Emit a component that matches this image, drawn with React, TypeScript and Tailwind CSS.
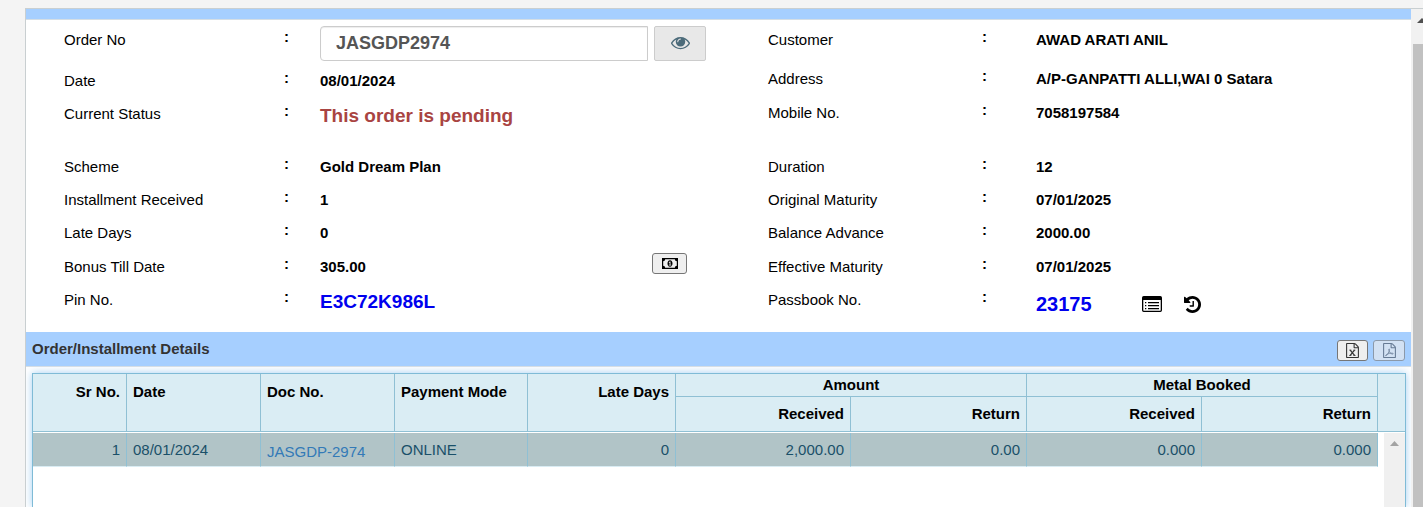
import type { ReactNode } from "react";

const FILE_OUTLINE =
  "M1596 380q28 28 48 76t20 88v1152q0 40-28 68t-68 28h-1344q-40 0-68-28t-28-68v-1600q0-40 28-68t68-28h896q40 0 88 20t76 48zm-444-244v376h376q-10-29-22-41l-313-313q-12-12-41-22zm384 1528v-1024h-416q-40 0-68-28t-28-68v-416h-768v1536h1280z";

function EyeIcon() {
  return (
    <svg viewBox="0 0 1792 1792" className="mb-[2px] h-[19px] w-[19px]" fill="currentColor" aria-hidden="true">
      <path d="M1664 960q-152-236-381-353 61 104 61 225 0 185-131.5 316.5t-316.5 131.5-316.5-131.5-131.5-316.5q0-121 61-225-229 117-381 353 133 205 333.5 326.5t434.5 121.5 434.5-121.5 333.5-326.5zm-720-384q0-20-14-34t-34-14q-125 0-214.5 89.5t-89.5 214.5q0 20 14 34t34 14 34-14 14-34q0-86 61-147t147-61q20 0 34-14t14-34zm848 384q0 34-20 69-140 230-376.5 368.5t-499.5 138.5-499.5-139-376.5-368q-20-35-20-69t20-69q140-229 376.5-368t499.5-139 499.5 139 376.5 368q20 35 20 69z" />
    </svg>
  );
}

function MoneyIcon() {
  return (
    <svg viewBox="0 0 16 11" className="h-[11px] w-4" aria-hidden="true">
      <path fill="currentColor" fillRule="evenodd" d="M0 0h16v11H0zM3.200 1.200A2.200 2.200 0 0 1 1.200 3.200v4.600a2.200 2.200 0 0 1 2 2h9.600a2.200 2.200 0 0 1 2-2V3.200a2.200 2.200 0 0 1-2-2z" />
      <path fill="currentColor" fillRule="evenodd" d="M8 2.200c1.600 0 2.500 1.500 2.500 3.300S9.600 8.800 8 8.800 5.500 7.300 5.500 5.500 6.400 2.200 8 2.200zM7.700 3.500l-1 .9.500.5.400-.3v2.100h-.8v.7h2.500v-.7h-.8V3.500z" />
    </svg>
  );
}

function ListIcon() {
  return (
    <svg viewBox="0 0 20 16" className="h-4 w-5" aria-hidden="true">
      <path fill="currentColor" fillRule="evenodd" d="M1.700 0h16.600A1.700 1.700 0 0 1 20 1.700v12.600a1.700 1.700 0 0 1-1.700 1.700H1.700A1.700 1.700 0 0 1 0 14.300V1.700A1.700 1.700 0 0 1 1.700 0zM1.300 4v10.300c0 .3.200.4.400.4h16.600c.2 0 .4-.1.400-.4V4z" />
      <path fill="currentColor" d="M3 6h1.300v1.200H3zM3 9h1.300v1.200H3zM3 12h1.300v1.200H3zM6 6h11v1.200H6zM6 9h11v1.200H6zM6 12h11v1.200H6z" />
    </svg>
  );
}

function HistoryIcon() {
  return (
    <svg viewBox="128 128 1536 1536" className="h-[17px] w-[17px]" fill="currentColor" aria-hidden="true">
      <path d="M1664 896q0 156-61 298t-164 245-245 164-298 61q-172 0-327-72.500t-264-204.500q-7-10-6.500-22.500t8.500-20.500l137-138q10-9 25-9 16 2 23 12 73 95 179 147t225 52q104 0 198.500-40.500t163.500-109.500 109.500-163.500 40.500-198.500-40.500-198.500-109.500-163.500-163.500-109.500-198.500-40.500q-98 0-188 35.500t-160 101.500l137 138q31 30 14 69-17 40-59 40h-448q-26 0-45-19t-19-45v-448q0-42 40-59 39-17 69 14l130 129q107-101 244.500-156.500t284.500-55.500q156 0 298 61t245 164 164 245 61 298zm-640-288v448q0 14-9 23t-23 9h-320q-14 0-23-9t-9-23v-64q0-14 9-23t23-9h224v-352q0-14 9-23t23-9h64q14 0 23 9t9 23z" />
    </svg>
  );
}

function ExcelIcon() {
  return (
    <svg viewBox="0 0 1792 1792" className="h-[15px] w-[15px]" aria-hidden="true">
      <path fill="currentColor" d={FILE_OUTLINE} />
      <path fill="none" stroke="currentColor" strokeWidth="150" d="M620 860l520 620M1140 860l-520 620" />
      <path fill="none" stroke="currentColor" strokeWidth="100" d="M520 850h240M1000 850h240M500 1490h260M1000 1490h260" />
    </svg>
  );
}

function PdfIcon() {
  return (
    <svg viewBox="0 0 1792 1792" className="h-[15px] w-[15px]" aria-hidden="true">
      <path fill="currentColor" d={FILE_OUTLINE} />
      <path
        fill="none"
        stroke="currentColor"
        strokeWidth="90"
        d="M850 700c-60 0-50 150 0 270 70 180 200 310 390 350 110 20 150-60 40-90-220-50-520 20-750 160-130 80-130 170-50 130 180-100 370-480 410-640 20-90 10-180-40-180z"
      />
    </svg>
  );
}

function Row({ label, htmlFor, tall, children }: { label: string; htmlFor?: string; tall?: boolean; children: ReactNode }) {
  return (
    <div className={tall ? "flex h-[41px] items-start" : "flex h-[33px] items-start"}>
      {htmlFor ? (
        <label htmlFor={htmlFor} className="w-[220px] shrink-0">{label}</label>
      ) : (
        <span className="w-[220px] shrink-0">{label}</span>
      )}
      <span className="w-9 shrink-0 font-bold leading-[14px]">:</span>
      <div className="min-w-0 flex-1 font-bold">{children}</div>
    </div>
  );
}

function RightRow({ label, tall, children }: { label: string; tall?: boolean; children: ReactNode }) {
  return (
    <div className={tall ? "flex h-[39px] items-start" : "flex h-[33px] items-start"}>
      <span className="w-[214px] shrink-0">{label}</span>
      <span className="w-[54px] shrink-0 font-bold leading-[14px]">:</span>
      <div className="min-w-0 flex-1 font-bold">{children}</div>
    </div>
  );
}

const headCell = "border-r border-[#8fc0d4] px-[6px] text-[15px] leading-5 font-bold text-black";
const bodyCell = "h-[34px] border-r border-b border-r-[#8fc0d4] border-b-[#d9ecf3] bg-[#b1c4c7] px-[6px] text-[15px] leading-5 text-[#1a5069]";

export default function App() {
  return (
    <div className="flex min-h-screen flex-col bg-[#f4f4f4] pt-2 pl-[25px] font-['Liberation_Sans',Arial,sans-serif] text-[15px] leading-5 text-black">
      <div className="flex flex-1 border-t border-l border-[#c9cfd1] bg-white">
        <main className="flex min-w-0 flex-1 flex-col">
          <div className="h-[11px] shrink-0 border-b border-[#d5dee5] bg-[#a6cfff]" />

          <section className="flex h-[312px] pt-[10px] pl-[38px]">
            <div className="w-[704px] shrink-0">
              <Row label="Order No" htmlFor="order-no" tall>
                <div className="-mt-1 flex gap-[6px]">
                  <input
                    id="order-no"
                    type="text"
                    defaultValue="JASGDP2974"
                    className="h-[35px] w-[328px] rounded-l border border-[#ccc] bg-white px-[15px] text-[18px] font-bold text-[#555] shadow-[inset_0_1px_1px_rgba(0,0,0,0.075)]"
                  />
                  <button type="button" aria-label="View order" className="flex h-[35px] w-[52px] items-center justify-center rounded-[2px] border border-[#ccc] bg-[#e8e8e8] text-[#4c6b7a]">
                    <EyeIcon />
                  </button>
                </div>
              </Row>
              <Row label="Date">08/01/2024</Row>
              <div className="mb-5">
                <Row label="Current Status">
                  <span className="block pt-[2px] text-[19px] text-[#a94442]">This order is pending</span>
                </Row>
              </div>
              <Row label="Scheme">Gold Dream Plan</Row>
              <Row label="Installment Received">1</Row>
              <div className="mb-px">
                <Row label="Late Days">0</Row>
              </div>
              <Row label="Bonus Till Date">
                <div className="flex items-start">
                  <span className="w-[332px]">305.00</span>
                  <button type="button" aria-label="Bonus payment" className="-mt-1 flex h-[21px] w-[35px] items-center justify-center rounded-[3px] border border-[#767676] bg-[#efefef]">
                    <MoneyIcon />
                  </button>
                </div>
              </Row>
              <Row label="Pin No.">
                <span className="block pt-[2px] text-[19px] text-[#0000ee]">E3C72K986L</span>
              </Row>
            </div>

            <div className="min-w-0 flex-1">
              <RightRow label="Customer" tall>AWAD ARATI ANIL</RightRow>
              <div className="mb-px">
                <RightRow label="Address">A/P-GANPATTI ALLI,WAI 0 Satara</RightRow>
              </div>
              <div className="mb-[21px]">
                <RightRow label="Mobile No.">7058197584</RightRow>
              </div>
              <RightRow label="Duration">12</RightRow>
              <RightRow label="Original Maturity">07/01/2025</RightRow>
              <div className="mb-px">
                <RightRow label="Balance Advance">2000.00</RightRow>
              </div>
              <RightRow label="Effective Maturity">07/01/2025</RightRow>
              <RightRow label="Passbook No.">
                <div className="flex items-center pt-1">
                  <span className="w-[106px] text-[20px] text-[#0000ee]">23175</span>
                  <button type="button" aria-label="Passbook entries" className="mr-[22px]">
                    <ListIcon />
                  </button>
                  <button type="button" aria-label="Passbook history">
                    <HistoryIcon />
                  </button>
                </div>
              </RightRow>
            </div>
          </section>

          <header className="flex h-[35px] shrink-0 items-center border-b border-[#d5dee5] bg-[#a6cfff] px-[6px]">
            <h2 className="flex-1 text-[15px] font-bold text-[#333]">Order/Installment Details</h2>
            <button type="button" aria-label="Export to Excel" className="mt-[2px] mr-[5px] flex h-[21px] w-[31px] items-center justify-center rounded-[3px] border border-[#767676] bg-[#efefef] text-[#333]">
              <ExcelIcon />
            </button>
            <button type="button" disabled aria-label="Export to PDF" className="mt-[2px] flex h-[21px] w-8 items-center justify-center rounded-[3px] border border-[#8b99aa] bg-[#d2e1f3] text-[#667a94]">
              <PdfIcon />
            </button>
          </header>

          <div className="flex flex-1 overflow-hidden pt-[6px] pr-[6px] pl-[6px]">
            <div className="relative flex-1 border-x border-t border-[#7fbbd6] bg-white shadow-[0_0_8px_rgba(102,175,233,0.6)]">
              <table className="w-full table-fixed border-separate border-spacing-0">
                <colgroup>
                  <col className="w-[94px]" />
                  <col className="w-[134px]" />
                  <col className="w-[134px]" />
                  <col className="w-[133px]" />
                  <col className="w-[148px]" />
                  <col className="w-[175px]" />
                  <col className="w-[176px]" />
                  <col className="w-[175px]" />
                  <col className="w-[176px]" />
                  <col className="w-[27px]" />
                </colgroup>
                <thead className="bg-[#daedf4]">
                  <tr className="h-[23px]">
                    <th rowSpan={2} className={`${headCell} border-b pt-2 text-right align-top`}>Sr No.</th>
                    <th rowSpan={2} className={`${headCell} border-b pt-2 text-left align-top`}>Date</th>
                    <th rowSpan={2} className={`${headCell} border-b pt-2 text-left align-top`}>Doc No.</th>
                    <th rowSpan={2} className={`${headCell} border-b pt-2 text-left align-top`}>Payment Mode</th>
                    <th rowSpan={2} className={`${headCell} border-b pt-2 text-right align-top`}>Late Days</th>
                    <th colSpan={2} className={`${headCell} border-b text-center`}>Amount</th>
                    <th colSpan={2} className={`${headCell} border-b text-center`}>Metal Booked</th>
                    <td rowSpan={2} className="border-b border-[#8fc0d4]" />
                  </tr>
                  <tr className="h-[35px]">
                    <th className={`${headCell} border-b text-right`}>Received</th>
                    <th className={`${headCell} border-b text-right`}>Return</th>
                    <th className={`${headCell} border-b text-right`}>Received</th>
                    <th className={`${headCell} border-b text-right`}>Return</th>
                  </tr>
                </thead>
                <tbody>
                  <tr className="h-px">
                    <td colSpan={10} className="h-px bg-white" />
                  </tr>
                  <tr>
                    <td className={`${bodyCell} text-right`}>1</td>
                    <td className={bodyCell}>08/01/2024</td>
                    <td className={`${bodyCell} pt-1`}>
                      <a href="#doc" className="text-[#337ab7]">JASGDP-2974</a>
                    </td>
                    <td className={bodyCell}>ONLINE</td>
                    <td className={`${bodyCell} text-right`}>0</td>
                    <td className={`${bodyCell} text-right`}>2,000.00</td>
                    <td className={`${bodyCell} text-right`}>0.00</td>
                    <td className={`${bodyCell} text-right`}>0.000</td>
                    <td className={`${bodyCell} text-right`}>0.000</td>
                    <td />
                  </tr>
                </tbody>
              </table>
              <div className="absolute top-[59px] right-0 bottom-0 w-[21px] bg-[#f0f0f0] pt-2">
                <svg viewBox="0 0 9 5" className="mx-auto h-[5px] w-[9px]" aria-hidden="true">
                  <path d="M4.500 0L9 5H0z" fill="#a3a3a3" />
                </svg>
              </div>
            </div>
          </div>
        </main>

        <div className="flex w-3 shrink-0 flex-col overflow-hidden bg-[#f1f1f1] pt-[9px] pl-[2px]">
          <svg viewBox="0 0 10 5" className="ml-1 h-[5px] w-[10px] shrink-0" aria-hidden="true">
            <path d="M5 0L10 5H0z" fill="#505050" />
          </svg>
          <div className="mt-[21px] w-[10px] flex-1 bg-[#c1c1c1]" />
        </div>
      </div>
    </div>
  );
}
